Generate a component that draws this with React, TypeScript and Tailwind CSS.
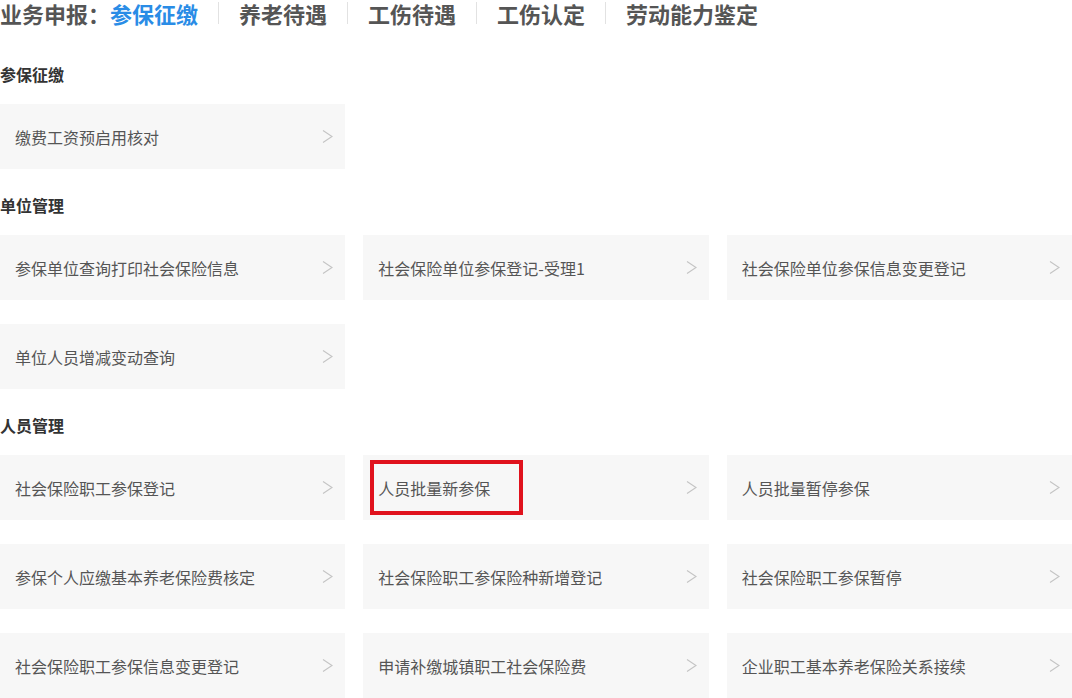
const tabs = ['养老待遇', '工伤待遇', '工伤认定', '劳动能力鉴定'];

const sections: { title: string; items: string[] }[] = [
  { title: '参保征缴', items: ['缴费工资预启用核对'] },
  {
    title: '单位管理',
    items: ['参保单位查询打印社会保险信息', '社会保险单位参保登记-受理1', '社会保险单位参保信息变更登记', '单位人员增减变动查询'],
  },
  {
    title: '人员管理',
    items: [
      '社会保险职工参保登记',
      '人员批量新参保',
      '人员批量暂停参保',
      '参保个人应缴基本养老保险费核定',
      '社会保险职工参保险种新增登记',
      '社会保险职工参保暂停',
      '社会保险职工参保信息变更登记',
      '申请补缴城镇职工社会保险费',
      '企业职工基本养老保险关系接续',
    ],
  },
];

const Chevron = () => (
  <svg width="11" height="15" viewBox="0 0 11 15" fill="none">
    <polyline points="1,1.5 10,7.5 1,13.5" stroke="#c4c4c4" strokeWidth="1.1" />
  </svg>
);

const App = () => {
  return (
    <div className="w-[1072px] h-[698px] overflow-hidden bg-white font-['Microsoft_YaHei','Noto_Sans_CJK_SC',sans-serif]">
      {/* 顶部导航 */}
      <div className="flex items-center h-[26px] text-[22px] leading-[26px] font-bold text-[#555]">
        <span>业务申报：</span>
        <span className="text-[#2a8ce6] pr-5">参保征缴</span>
        {tabs.map((t) => (
          <div key={t} className="flex items-center">
            <span className="w-px h-[22px] bg-[#e2e2e2]" />
            <span className={t === '劳动能力鉴定' ? 'pl-5' : 'px-5'}>{t}</span>
          </div>
        ))}
      </div>

      <div className="mt-[36px] flex flex-col gap-6">
        {sections.map((s) => (
          <div key={s.title}>
            <h3 className="text-base leading-6 font-bold text-[#333] mb-[18px]">{s.title}</h3>
            <div className="grid grid-cols-3 gap-x-[18px] gap-y-6">
              {s.items.map((item) => (
                <div
                  key={item}
                  className="relative h-[65px] bg-[#f7f7f7] flex items-center justify-between pl-[15px] pr-3 text-base text-[#555]"
                >
                  <span>{item}</span>
                  <Chevron />
                  {item === '人员批量新参保' && (
                    <div className="absolute left-[7px] top-[5px] w-[153px] h-[55px] border-4 border-[#e0121d]" />
                  )}
                </div>
              ))}
            </div>
          </div>
        ))}
      </div>
    </div>
  );
};

export default App;
